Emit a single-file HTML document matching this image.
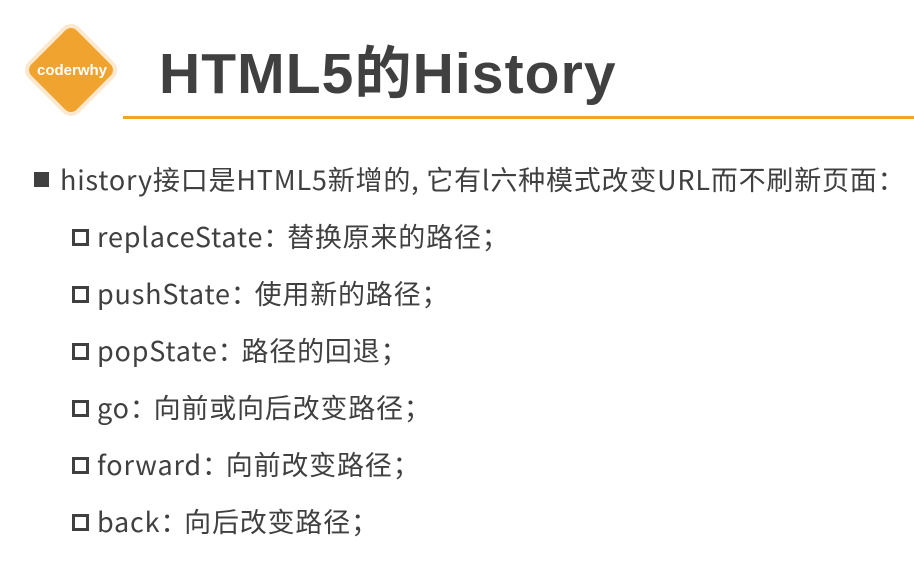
<!DOCTYPE html>
<html><head><meta charset="utf-8"><style>
body{margin:0;width:914px;height:580px;background:#fff;position:relative;overflow:hidden;font-family:"Liberation Sans","Noto Sans CJK SC",sans-serif;color:#404040}
.logo{position:absolute;left:35px;top:34px;width:64px;height:64px;background:#f0a32e;border:4px solid #fbe8cf;border-radius:12px;transform:rotate(45deg)}
.lt{position:absolute;left:22px;top:62px;width:100px;text-align:center;color:#fff;font-weight:bold;font-size:15px}
.title{position:absolute;left:159px;top:28px;font-size:57px;font-weight:bold;color:#404040;white-space:nowrap;letter-spacing:1.1px}
.line{position:absolute;left:123px;top:116px;width:791px;height:3px;background:#f0a32e}
.row{position:absolute;font-size:27px;white-space:nowrap;line-height:30px;font-family:"Noto Sans CJK SC",sans-serif;letter-spacing:0.8px}
.c{margin-right:-4px}
.b1{position:absolute;left:34px;top:172px;width:15px;height:15px;background:#404040}
.b2{position:absolute;width:11px;height:11px;border:3px solid #404040}
</style></head><body>
<div class="logo"></div><div class="lt">coderwhy</div>
<div class="title">HTML5的History</div>
<div class="line"></div>
<div class="b1"></div>
<div class="row" style="left:60px;top:164px">history接口是HTML5新增的, 它有l六种模式改变URL而不刷新页面：</div>
<div class="b2" style="left:72px;top:229px"></div><div class="row" style="left:97px;top:221px">replaceState<span class="c">：</span>替换原来的路径；</div>
<div class="b2" style="left:72px;top:286px"></div><div class="row" style="left:97px;top:278px">pushState<span class="c">：</span>使用新的路径；</div>
<div class="b2" style="left:72px;top:343px"></div><div class="row" style="left:97px;top:335px">popState<span class="c">：</span>路径的回退；</div>
<div class="b2" style="left:72px;top:400px"></div><div class="row" style="left:97px;top:392px">go<span class="c">：</span>向前或向后改变路径；</div>
<div class="b2" style="left:72px;top:457px"></div><div class="row" style="left:97px;top:449px">forward<span class="c">：</span>向前改变路径；</div>
<div class="b2" style="left:72px;top:514px"></div><div class="row" style="left:97px;top:506px">back<span class="c">：</span>向后改变路径；</div>
</body></html>
